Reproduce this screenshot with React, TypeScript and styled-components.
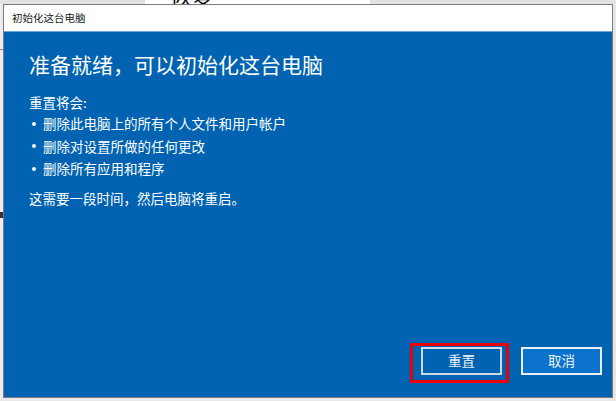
import React from "react";
import styled, { createGlobalStyle } from "styled-components";

const GlobalStyle = createGlobalStyle`
	html, body {
		margin: 0;
		padding: 0;
		background: #e9e9e9;
	}
	* {
		box-sizing: border-box;
	}
`;

const FONT = `"Noto Sans CJK SC", "Noto Sans", sans-serif`;

const bullets = ["删除此电脑上的所有个人文件和用户帐户", "删除对设置所做的任何更改", "删除所有应用和程序"];

const App = () => {
	return (
		<>
			<GlobalStyle />
			<Desktop>
				<TopStrip>
					<StripPart $width={145} $tone="gray" />
					<StripPart $width={225} $tone="white">
						<BehindTitle>恢复</BehindTitle>
					</StripPart>
					<StripPart $tone="gray" />
				</TopStrip>
				<Middle>
					<Gutter $line />
					<Dialog>
						<TitleBar>初始化这台电脑</TitleBar>
						<Body>
							<Heading>准备就绪，可以初始化这台电脑</Heading>
							<Intro>重置将会:</Intro>
							<List>
								{bullets.map((b) => (
									<Item key={b}>
										<Dot />
										{b}
									</Item>
								))}
							</List>
							<Note>这需要一段时间，然后电脑将重启。</Note>
							<Footer>
								<ButtonWrap>
									<Button $variant="plain">重置</Button>
									<Highlight />
								</ButtonWrap>
								<Button $variant="accent">取消</Button>
							</Footer>
						</Body>
					</Dialog>
					<Gutter />
				</Middle>
			</Desktop>
		</>
	);
};

export default App;

const Desktop = styled.div`
	display: flex;
	flex-direction: column;
	width: 616px;
	height: 401px;
	overflow: hidden;
	background: #e9e9e9;
`;

const TopStrip = styled.div`
	display: flex;
	height: 4px;
	overflow: hidden;
`;

const StripPart = styled.div<{ $width?: number; $tone: "gray" | "white" }>`
	flex: ${(p) => (p.$width ? `0 0 ${p.$width}px` : "1 1 auto")};
	background: ${(p) => (p.$tone === "white" ? "#ffffff" : "#e2e2e2")};
	overflow: hidden;
`;

const BehindTitle = styled.span`
	display: block;
	margin: -17px 0 0 25px;
	font-family: ${FONT};
	font-size: 22px;
	line-height: 22px;
	color: #111;
`;

const Middle = styled.div`
	display: flex;
	height: 394px;
`;

const Gutter = styled.div<{ $line?: boolean }>`
	flex: 0 0 3px;
	background: ${(p) =>
		p.$line
			? "linear-gradient(to bottom, #ececec 45px, #8c8c8c 45px, #8c8c8c 46px, #ececec 46px, #ececec 208px, #333 208px, #333 214px, #ececec 214px)"
			: "#e6e6e6"};
`;

const Dialog = styled.div`
	flex: 0 0 610px;
	display: flex;
	flex-direction: column;
	border: 1px solid #7b7b7b;
	background: #0063b1;
`;

const TitleBar = styled.div`
	display: flex;
	align-items: center;
	height: 27px;
	padding: 0 0 1px 8px;
	background: #ffffff;
	border-bottom: 1px solid #6ea6dc;
	font-family: ${FONT};
	font-size: 10.5px;
	color: #1a1a1a;
`;

const Body = styled.div`
	flex: 1 1 auto;
	display: flex;
	flex-direction: column;
	padding: 18px 10px 22px 25px;
	font-family: ${FONT};
	color: #ffffff;
`;

const Heading = styled.div`
	font-size: 21px;
	line-height: 28px;
	margin: 0 0 14px;
`;

const Intro = styled.div`
	font-size: 13.5px;
	line-height: 20px;
`;

const List = styled.div`
	display: flex;
	flex-direction: column;
`;

const Item = styled.div`
	display: flex;
	align-items: center;
	font-size: 13.5px;
	line-height: 22.5px;
`;

const Dot = styled.span`
	flex: 0 0 auto;
	width: 4px;
	height: 4px;
	margin: 1px 7px 0 3px;
	border-radius: 50%;
	background: #f2f5f9;
`;

const Note = styled.div`
	font-size: 13.5px;
	line-height: 20px;
	margin-top: 8px;
`;

const Footer = styled.div`
	display: flex;
	justify-content: flex-end;
	gap: 19px;
	margin-top: auto;
`;

const ButtonWrap = styled.div`
	position: relative;
	display: flex;
`;

const Button = styled.button<{ $variant: "plain" | "accent" }>`
	width: 81px;
	height: 28px;
	padding: 0;
	border: 2px solid ${(p) => (p.$variant === "accent" ? "#e8f0f8" : "#cfd9e3")};
	background: ${(p) => (p.$variant === "accent" ? "#0b73cc" : "#0063b1")};
	font-family: ${FONT};
	font-size: 13.5px;
	line-height: 1;
	color: #eef2f6;
`;

const Highlight = styled.div`
	position: absolute;
	left: -11px;
	top: -4px;
	width: 99px;
	height: 40px;
	border: 3px solid #e8000b;
	pointer-events: none;
`;
